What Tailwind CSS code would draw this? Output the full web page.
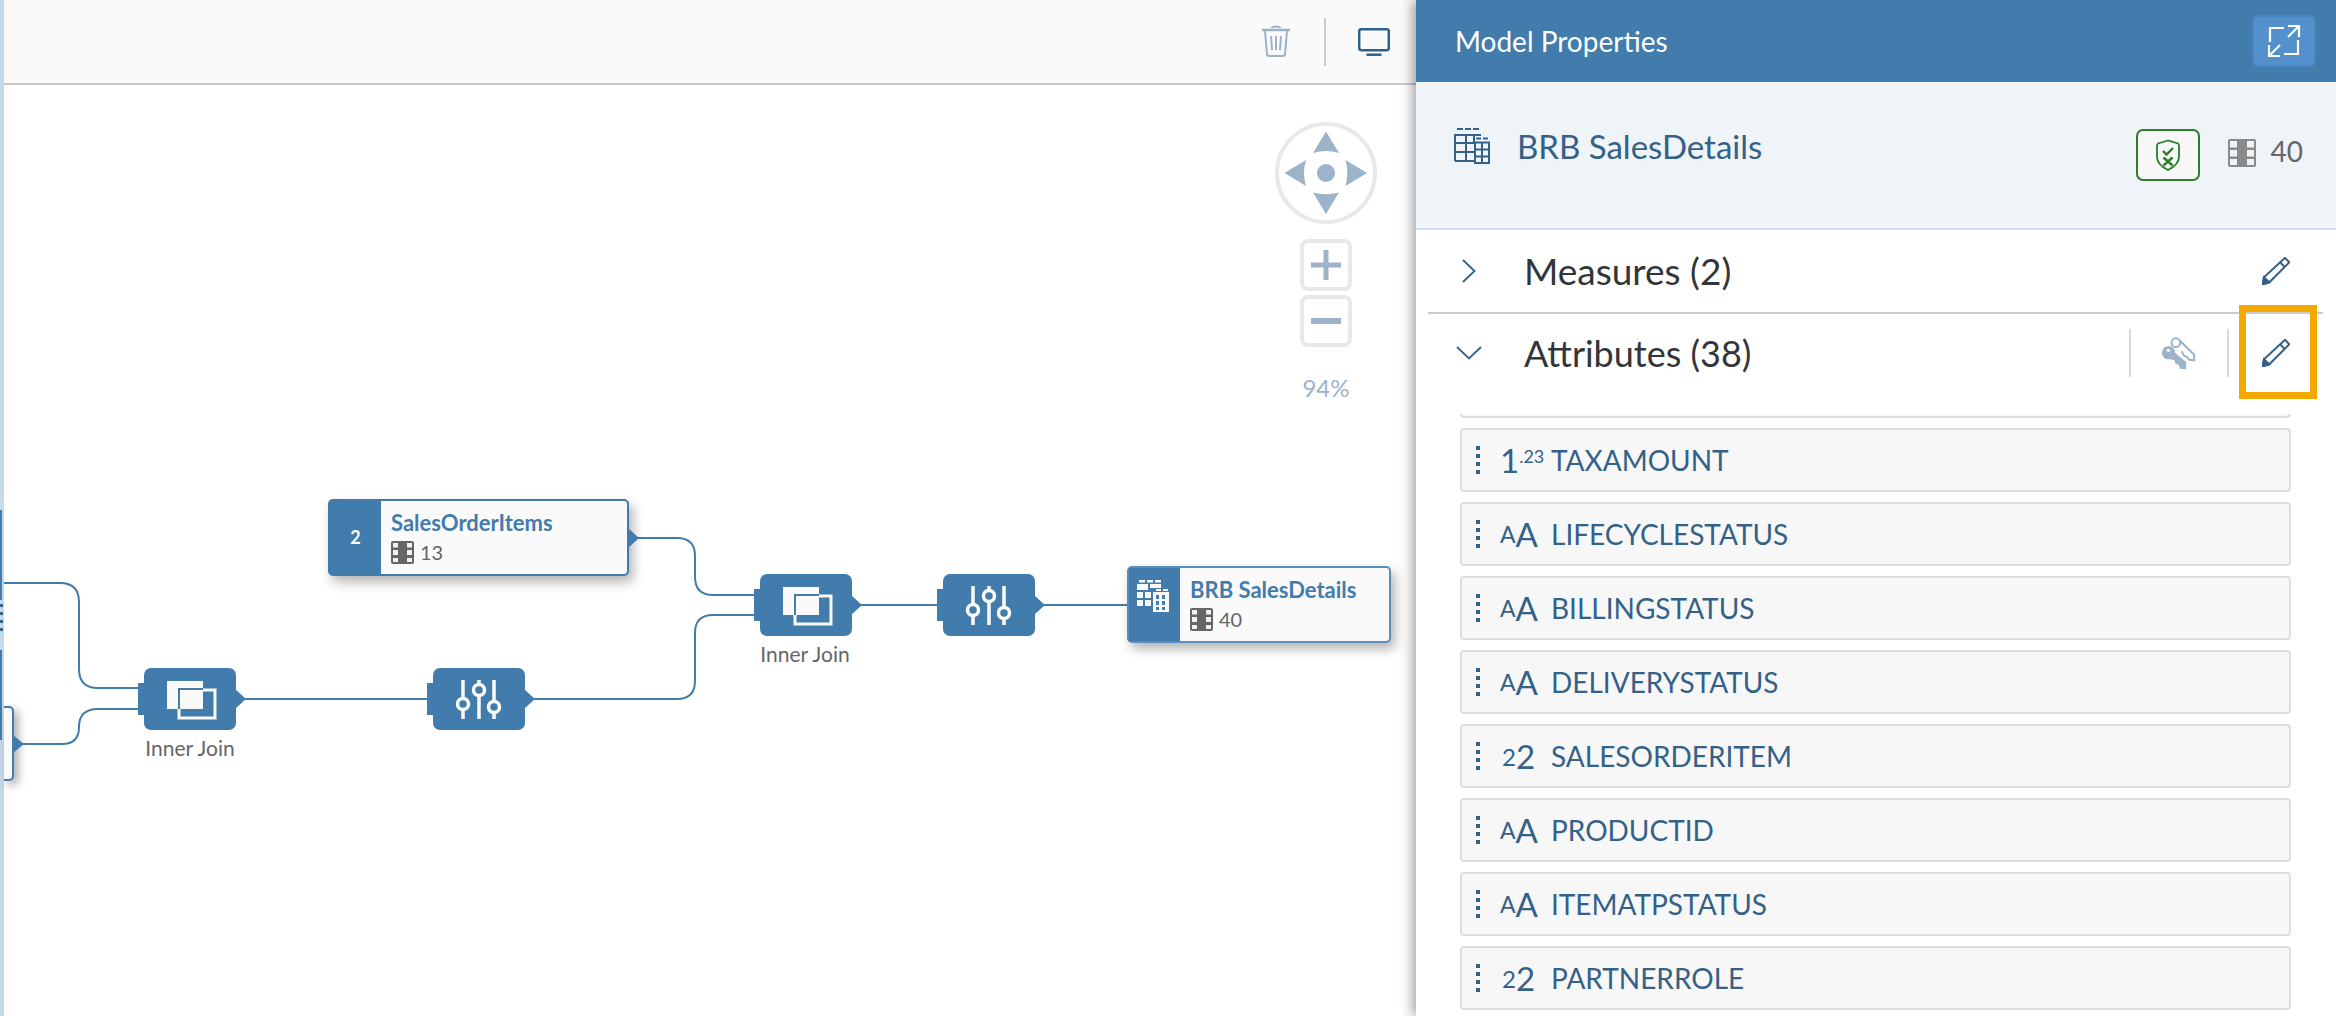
<!DOCTYPE html>
<html>
<head>
<meta charset="utf-8">
<script src="https://cdn.jsdelivr.net/npm/@tailwindcss/browser@4"></script>
<title>Model Properties</title>
</head>
<body class="font-['Lato','Open_Sans',sans-serif] bg-white">
<div class="flex w-[2336px] h-[1016px] overflow-hidden relative">

  <!-- Left: editor -->
  <div class="relative w-[1416px] h-full shrink-0 bg-white">
    <div class="absolute left-0 top-0 w-[4px] h-full bg-[#c6d9eb]"></div>
    <div class="absolute left-0 top-[510px] w-[2px] h-[90px] bg-[#427cac]"></div>
    <div class="absolute left-0 top-[650px] w-[2px] h-[90px] bg-[#427cac]"></div>
    <div class="absolute left-0 top-[604px] w-[3px] flex flex-col gap-[5px]">
      <div class="h-[3px] bg-[#346187]"></div><div class="h-[3px] bg-[#346187]"></div><div class="h-[3px] bg-[#346187]"></div><div class="h-[3px] bg-[#346187]"></div>
    </div>

    <!-- toolbar -->
    <div class="ml-[4px] h-[85px] bg-[#fafafa] border-b-2 border-[#c8c8c8] flex items-center justify-end pr-[26px]">
      <svg class="w-[28px] h-[32px] mt-[-1px]" viewBox="0 0 28 32" fill="none" stroke="#9bb3c9" stroke-width="2"><path d="M0 5h28" stroke-width="2.5"/><path d="M10 3c0-2 8-2 8 0" stroke-width="2"/><path d="M3 6l2 23c0 1.500 1 2 2 2h14c1 0 2-.5 2-2l2-23"/><path d="M9 11l1 14M14 11v14M19 11l-1 14"/></svg>
      <div class="w-[2px] h-[48px] bg-[#cccccc] ml-[34px] mr-[32px]"></div>
      <svg class="w-[32px] h-[28px]" viewBox="0 0 32 28" fill="none" stroke="#2f6089" stroke-width="2.500"><rect x="1.200" y="1.200" width="29.600" height="21" rx="2"/><path d="M8.500 26.700h15"/></svg>
    </div>

    <!-- nav control -->
    <div class="absolute left-[1275px] top-[122px] w-[102px] flex flex-col items-center">
      <svg class="w-[102px] h-[102px]" viewBox="0 0 102 102">
        <circle cx="51" cy="51" r="49" fill="#fff" stroke="#e8e8e8" stroke-width="4"/>
        <g fill="#9db3c9">
          <path d="M51 9.500L64 31Q51 27 38 31Z"/>
          <path d="M51 92L64 70.500Q51 74 38 70.500Z"/>
          <path d="M9.500 51L31 38Q27 51 31 64Z"/>
          <path d="M92 51L70.500 38Q74 51 70.500 64Z"/>
          <circle cx="51" cy="51" r="9"/>
        </g>
      </svg>
      <div class="mt-[15px] w-[52px] h-[52px] rounded-[8px] border-4 border-[#e8e8e8] bg-white flex items-center justify-center">
        <svg class="w-[30px] h-[30px]" viewBox="0 0 30 30" fill="#9db3c9"><path d="M12.500 0h5v12.500H30v5H17.500V30h-5V17.500H0v-5h12.500z"/></svg>
      </div>
      <div class="mt-[4px] w-[52px] h-[52px] rounded-[8px] border-4 border-[#e8e8e8] bg-white flex items-center justify-center">
        <div class="w-[30px] h-[6px] bg-[#9db3c9]"></div>
      </div>
      <div class="mt-[27px] text-[24px] leading-[28px] text-[#9db3c9]">94%</div>
    </div>

    <!-- connectors -->
    <svg class="absolute left-0 top-0" width="1416" height="1016" fill="none" stroke="#427cac" stroke-width="2">
      <path d="M4 583H60Q79 583 79 602V669Q79 688 98 688H140"/>
      <path d="M20 744H62Q79 744 79 727Q79 709 98 709H140"/>
      <path d="M240 699H430"/>
      <path d="M634 538H677Q695 538 695 556V577Q695 595 713 595H756"/>
      <path d="M530 699H677Q695 699 695 681V633Q695 615 713 615H756"/>
      <path d="M855 605H940"/>
      <path d="M1040 605H1128"/>
    </svg>

    <!-- partial node at left edge -->
    <div class="absolute left-[4px] top-[706px] w-[10px] h-[75px] bg-[#fafafa] border-2 border-l-0 border-[#427cac] rounded-r-[5px] shadow-[4px_4px_10px_rgba(0,0,0,0.35)]"></div>
    <svg class="absolute left-[13px] top-[735px]" width="11" height="18" viewBox="0 0 11 18"><path d="M0 0L11 9L0 18Z" fill="#427cac"/></svg>

    <!-- join 1 -->
    <div class="absolute left-[138px] top-[668px] w-[108px] h-[62px]">
      <div class="absolute left-0 top-[15px] w-[7px] h-[32px] bg-[#427cac]"></div>
      <div class="absolute left-[6px] top-0 w-[92px] h-[62px] rounded-[7px] bg-[#427cac] flex items-center justify-center">
        <svg width="92" height="62" viewBox="0 0 92 62"><rect x="23" y="13" width="36" height="28" fill="#fafafa"/><rect x="35" y="22" width="36" height="28" fill="none" stroke="#fafafa" stroke-width="3"/><path d="M35 41V21H59" fill="none" stroke="#427cac" stroke-width="2"/></svg>
      </div>
      <svg class="absolute left-[98px] top-[22px]" width="10" height="18" viewBox="0 0 10 18"><path d="M0 0L10 9L0 18Z" fill="#427cac"/></svg>
    </div>
    <div class="absolute left-[140px] top-[736px] w-[100px] text-center text-[21px] leading-[24px] text-[#666666] whitespace-nowrap">Inner Join</div>

    <!-- filter 1 -->
    <div class="absolute left-[427px] top-[668px] w-[108px] h-[62px]">
      <div class="absolute left-0 top-[15px] w-[7px] h-[32px] bg-[#427cac]"></div>
      <div class="absolute left-[6px] top-0 w-[92px] h-[62px] rounded-[7px] bg-[#427cac]">
        <svg width="92" height="62" viewBox="0 0 92 62" fill="none" stroke="#fafafa" stroke-width="3.500"><path d="M30 12V51M46 12V51M61 12V51"/><g fill="#427cac"><circle cx="30" cy="36" r="5.500"/><circle cx="46" cy="22" r="5.500"/><circle cx="61" cy="39" r="5.500"/></g></svg>
      </div>
      <svg class="absolute left-[98px] top-[22px]" width="10" height="18" viewBox="0 0 10 18"><path d="M0 0L10 9L0 18Z" fill="#427cac"/></svg>
    </div>

    <!-- SalesOrderItems -->
    <div class="absolute left-[328px] top-[499px] w-[301px] h-[77px] flex rounded-[5px] border-2 border-[#427cac] bg-[#fafafa] shadow-[4px_6px_12px_rgba(0,0,0,0.3)]">
      <div class="w-[51px] shrink-0 bg-[#427cac] flex items-center justify-center text-white text-[18px] font-bold">2</div>
      <div class="pl-[10px] pt-[10px]">
        <div class="text-[22px] leading-[24px] font-bold text-[#427cac]">SalesOrderItems</div>
        <div class="flex items-center gap-[6px] mt-[5px] text-[20px] leading-[24px] text-[#666666]">
          <svg width="23" height="23" viewBox="0 0 23 23"><rect width="23" height="23" rx="2" fill="#666666"/><g fill="#f2f2f2"><rect x="2" y="2" width="5" height="4.500"/><rect x="2" y="9" width="5" height="5"/><rect x="2" y="17" width="5" height="4"/><rect x="16" y="2" width="5" height="4.500"/><rect x="16" y="9" width="5" height="5"/><rect x="16" y="17" width="5" height="4"/></g></svg>
          <span>13</span>
        </div>
      </div>
    </div>
    <svg class="absolute left-[629px] top-[529px]" width="10" height="18" viewBox="0 0 10 18"><path d="M0 0L10 9L0 18Z" fill="#427cac"/></svg>

    <!-- join 2 -->
    <div class="absolute left-[754px] top-[574px] w-[108px] h-[62px]">
      <div class="absolute left-0 top-[15px] w-[7px] h-[32px] bg-[#427cac]"></div>
      <div class="absolute left-[6px] top-0 w-[92px] h-[62px] rounded-[7px] bg-[#427cac]">
        <svg width="92" height="62" viewBox="0 0 92 62"><rect x="23" y="13" width="36" height="28" fill="#fafafa"/><rect x="35" y="22" width="36" height="28" fill="none" stroke="#fafafa" stroke-width="3"/><path d="M35 41V21H59" fill="none" stroke="#427cac" stroke-width="2"/></svg>
      </div>
      <svg class="absolute left-[98px] top-[22px]" width="10" height="18" viewBox="0 0 10 18"><path d="M0 0L10 9L0 18Z" fill="#427cac"/></svg>
    </div>
    <div class="absolute left-[755px] top-[642px] w-[100px] text-center text-[21px] leading-[24px] text-[#666666] whitespace-nowrap">Inner Join</div>

    <!-- filter 2 -->
    <div class="absolute left-[937px] top-[574px] w-[108px] h-[62px]">
      <div class="absolute left-0 top-[15px] w-[7px] h-[32px] bg-[#427cac]"></div>
      <div class="absolute left-[6px] top-0 w-[92px] h-[62px] rounded-[7px] bg-[#427cac]">
        <svg width="92" height="62" viewBox="0 0 92 62" fill="none" stroke="#fafafa" stroke-width="3.500"><path d="M30 12V51M46 12V51M61 12V51"/><g fill="#427cac"><circle cx="30" cy="36" r="5.500"/><circle cx="46" cy="22" r="5.500"/><circle cx="61" cy="39" r="5.500"/></g></svg>
      </div>
      <svg class="absolute left-[98px] top-[22px]" width="10" height="18" viewBox="0 0 10 18"><path d="M0 0L10 9L0 18Z" fill="#427cac"/></svg>
    </div>

    <!-- BRB SalesDetails node -->
    <div class="absolute left-[1127px] top-[566px] w-[264px] h-[77px] flex rounded-[5px] border-2 border-[#5a8fbb] bg-[#fafafa] shadow-[4px_6px_12px_rgba(0,0,0,0.3)]">
      <div class="w-[51px] shrink-0 bg-[#427cac] pl-[8px] pt-[12px]">
        <svg width="32" height="32" viewBox="0 0 32 32" fill="#fafafa"><rect x="2" y="0" width="6" height="2.500"/><rect x="10" y="0" width="6" height="2.500"/><rect x="18" y="0" width="6" height="2.500"/><path d="M0 4h11v6H0zM13 4h11v4H13zM0 12h6v6H0zM8 12h6v6H8zM0 20h6v6H0zM8 20h6v6H8zM19 9h5v2h-5zM26 9h5v2h-5z"/><path fill-rule="evenodd" d="M16 12h16v20H16zM19 15v4h3v-4zM25 15v4h3v-4zM19 21v4h3v-4zM25 21v4h3v-4zM19 27v3h3v-3zM25 27v3h3v-3z"/></svg>
      </div>
      <div class="pl-[10px] pt-[10px]">
        <div class="text-[22px] leading-[24px] font-bold text-[#427cac] whitespace-nowrap">BRB SalesDetails</div>
        <div class="flex items-center gap-[6px] mt-[5px] text-[20px] leading-[24px] text-[#666666]">
          <svg width="23" height="23" viewBox="0 0 23 23"><rect width="23" height="23" rx="2" fill="#666666"/><g fill="#f2f2f2"><rect x="2" y="2" width="5" height="4.500"/><rect x="2" y="9" width="5" height="5"/><rect x="2" y="17" width="5" height="4"/><rect x="16" y="2" width="5" height="4.500"/><rect x="16" y="9" width="5" height="5"/><rect x="16" y="17" width="5" height="4"/></g></svg>
          <span>40</span>
        </div>
      </div>
    </div>
  </div>

  <!-- Right panel -->
  <div class="relative w-[920px] h-full shrink-0 bg-white shadow-[-3px_0_12px_rgba(0,0,0,0.4)] flex flex-col">
    <div class="h-[82px] shrink-0 bg-[#427cac] flex items-center justify-between pl-[39px] pr-[20px]">
      <div class="text-[28px] leading-[34px] text-white">Model Properties</div>
      <div class="w-[64px] h-[52px] rounded-[6px] bg-[#5390cc] border-2 border-[#4a86c2] flex items-center justify-center">
        <svg width="34" height="34" viewBox="0 0 34 34" fill="none" stroke="#fff" stroke-width="2.200"><path d="M3 18V4h14M17 30h14V16M21 2h11v11M32 2L21 13M2 21v11h11M2 32l11-11" /></svg>
      </div>
    </div>

    <div class="h-[148px] shrink-0 bg-[#eff4f9] border-b-2 border-[#d1e0ee] flex items-start justify-between pt-[46px] pl-[38px] pr-[33px]">
      <div class="flex items-start">
        <svg width="36" height="36" viewBox="0 0 36 36" fill="none" stroke="#346187" stroke-width="2"><path d="M3 1h6M11 1h6M19 1h6M22 10.500h5M29 10.500h5"/><path d="M1 33V7H27M1 15H20M1 24H20M1 33H20M12 7V33M20 7V14"/><rect x="21" y="14.500" width="14" height="20.500"/><path d="M28 14.500V35M21 21.500H35M21 28.500H35"/></svg>
        <div class="ml-[27px] mt-[1px] text-[33px] leading-[34px] text-[#346187] whitespace-nowrap">BRB SalesDetails</div>
      </div>
      <div class="flex items-start">
        <div class="mt-[1px] w-[64px] h-[52px] rounded-[7px] bg-[#f7f7f7] border-2 border-[#2b7d2b] flex items-center justify-center">
          <svg width="24" height="32" viewBox="0 0 24 32" fill="none" stroke="#2b7d2b" stroke-width="1.800"><path d="M12 1.500L2 4.500L1 6V18C1 24 6 28 12 31C18 28 23 24 23 18V6L22 4.500Z"/><path d="M7 12l3.500 3.500L17 9" stroke-width="2.400"/><path d="M7.500 18.500l9 8M16.500 18.500l-9 8" stroke-width="2.400"/></svg>
        </div>
        <svg class="ml-[28px] mt-[11px]" width="28" height="28" viewBox="0 0 28 28"><rect width="28" height="28" rx="2" fill="#8a8a8a"/><g fill="#eff4f9"><rect x="2" y="2" width="7" height="6.500"/><rect x="2" y="11" width="7" height="6.500"/><rect x="2" y="20" width="7" height="6"/><rect x="19" y="2" width="7" height="6.500"/><rect x="19" y="11" width="7" height="6.500"/><rect x="19" y="20" width="7" height="6"/></g></svg>
        <div class="ml-[15px] mt-[7px] text-[28px] leading-[32px] text-[#666666]">40</div>
      </div>
    </div>

    <!-- Measures -->
    <div class="h-[82px] shrink-0 flex items-center pl-[46px] pr-[46px]">
      <svg width="14" height="24" viewBox="0 0 14 24" fill="none" stroke="#346187" stroke-width="1.800"><path d="M1 1L12.500 12L1 23"/></svg>
      <div class="ml-[48px] text-[37px] leading-[44px] text-[#32363a]">Measures (2)</div>
      <svg class="ml-auto" width="28" height="28" viewBox="0 0 28 28" fill="none" stroke="#346187" stroke-width="2"><path d="M.7 27.300L2 20.300L23 .8L27.300 5.300L7.300 25.300Z"/><path d="M18 5.300L23 10.300"/><path d="M.7 27.300L2 20.300L7.300 25.300Z" fill="#346187"/></svg>
    </div>
    <div class="h-[2px] shrink-0 bg-[#cccccc] ml-[12px] mr-[13px]"></div>

    <!-- Attributes -->
    <div class="h-[78px] shrink-0 flex items-center pl-[40px] pr-[46px]">
      <svg width="26" height="14" viewBox="0 0 26 14" fill="none" stroke="#346187" stroke-width="1.800"><path d="M1 1L13 12.500L25 1"/></svg>
      <div class="ml-[42px] text-[36px] leading-[44px] text-[#32363a]">Attributes (38)</div>
      <div class="ml-auto w-[2px] h-[48px] bg-[#d9d9d9]"></div>
      <svg class="ml-[29px]" width="37" height="35" viewBox="30 20 110 105">
        <g fill="none" stroke="#9db3c9" stroke-width="6"><circle cx="77" cy="40" r="13"/><path d="M88 33L132 76V93L116 91L110 82L102 80L94 66"/></g>
        <path fill="#9db3c9" d="M62 60L108 98V120L90 118L85 106L77 104L72 92L52 88Z"/>
        <circle cx="55" cy="70" r="20" fill="#9db3c9"/>
        <circle cx="55" cy="63" r="5" fill="#fff"/>
      </svg>
      <div class="ml-[30px] w-[2px] h-[48px] bg-[#d9d9d9]"></div>
      <svg class="ml-[33px]" width="28" height="28" viewBox="0 0 28 28" fill="none" stroke="#346187" stroke-width="2"><path d="M.7 27.300L2 20.300L23 .8L27.300 5.300L7.300 25.300Z"/><path d="M18 5.300L23 10.300"/><path d="M.7 27.300L2 20.300L7.300 25.300Z" fill="#346187"/></svg>
    </div>
    <div class="absolute left-[823px] top-[305px] w-[78px] h-[94px] border-[7px] border-[#f3a900]"></div>

    <!-- List -->
    <div class="mt-[22px] ml-[44px] mr-[45px] h-[4px] shrink-0 border-x-2 border-b-2 border-[#dedede] bg-[#f7f7f7] rounded-b-[4px]"></div>
    <div class="mt-[10px] ml-[44px] mr-[45px] flex flex-col gap-[10px]">

      <div class="h-[64px] shrink-0 rounded-[4px] border-2 border-[#dedede] bg-[#f7f7f7] flex items-center pl-[14px] text-[#346187]">
        <div class="flex flex-col gap-[4px]"><div class="w-[4px] h-[4px] bg-[#346187]"></div><div class="w-[4px] h-[4px] bg-[#346187]"></div><div class="w-[4px] h-[4px] bg-[#346187]"></div><div class="w-[4px] h-[4px] bg-[#346187]"></div></div>
        <div class="w-[40px] ml-[20px] shrink-0 flex items-start leading-none"><span class="text-[33px]">1</span><span class="text-[18px] mt-[3px] whitespace-nowrap">.23</span></div>
        <div class="ml-[11px] text-[28px] leading-[32px]">TAXAMOUNT</div>
      </div>

      <div class="h-[64px] shrink-0 rounded-[4px] border-2 border-[#dedede] bg-[#f7f7f7] flex items-center pl-[14px] text-[#346187]">
        <div class="flex flex-col gap-[4px]"><div class="w-[4px] h-[4px] bg-[#346187]"></div><div class="w-[4px] h-[4px] bg-[#346187]"></div><div class="w-[4px] h-[4px] bg-[#346187]"></div><div class="w-[4px] h-[4px] bg-[#346187]"></div></div>
        <div class="w-[40px] ml-[20px] shrink-0 flex items-end leading-none"><span class="text-[23px] mb-[5px]">A</span><span class="text-[33px]">A</span></div>
        <div class="ml-[11px] text-[28px] leading-[32px]">LIFECYCLESTATUS</div>
      </div>

      <div class="h-[64px] shrink-0 rounded-[4px] border-2 border-[#dedede] bg-[#f7f7f7] flex items-center pl-[14px] text-[#346187]">
        <div class="flex flex-col gap-[4px]"><div class="w-[4px] h-[4px] bg-[#346187]"></div><div class="w-[4px] h-[4px] bg-[#346187]"></div><div class="w-[4px] h-[4px] bg-[#346187]"></div><div class="w-[4px] h-[4px] bg-[#346187]"></div></div>
        <div class="w-[40px] ml-[20px] shrink-0 flex items-end leading-none"><span class="text-[23px] mb-[5px]">A</span><span class="text-[33px]">A</span></div>
        <div class="ml-[11px] text-[28px] leading-[32px]">BILLINGSTATUS</div>
      </div>

      <div class="h-[64px] shrink-0 rounded-[4px] border-2 border-[#dedede] bg-[#f7f7f7] flex items-center pl-[14px] text-[#346187]">
        <div class="flex flex-col gap-[4px]"><div class="w-[4px] h-[4px] bg-[#346187]"></div><div class="w-[4px] h-[4px] bg-[#346187]"></div><div class="w-[4px] h-[4px] bg-[#346187]"></div><div class="w-[4px] h-[4px] bg-[#346187]"></div></div>
        <div class="w-[40px] ml-[20px] shrink-0 flex items-end leading-none"><span class="text-[23px] mb-[5px]">A</span><span class="text-[33px]">A</span></div>
        <div class="ml-[11px] text-[28px] leading-[32px]">DELIVERYSTATUS</div>
      </div>

      <div class="h-[64px] shrink-0 rounded-[4px] border-2 border-[#dedede] bg-[#f7f7f7] flex items-center pl-[14px] text-[#346187]">
        <div class="flex flex-col gap-[4px]"><div class="w-[4px] h-[4px] bg-[#346187]"></div><div class="w-[4px] h-[4px] bg-[#346187]"></div><div class="w-[4px] h-[4px] bg-[#346187]"></div><div class="w-[4px] h-[4px] bg-[#346187]"></div></div>
        <div class="w-[40px] ml-[20px] pl-[2px] shrink-0 flex items-end leading-none"><span class="text-[24px] mb-[4px]">2</span><span class="text-[33px]">2</span></div>
        <div class="ml-[11px] text-[28px] leading-[32px]">SALESORDERITEM</div>
      </div>

      <div class="h-[64px] shrink-0 rounded-[4px] border-2 border-[#dedede] bg-[#f7f7f7] flex items-center pl-[14px] text-[#346187]">
        <div class="flex flex-col gap-[4px]"><div class="w-[4px] h-[4px] bg-[#346187]"></div><div class="w-[4px] h-[4px] bg-[#346187]"></div><div class="w-[4px] h-[4px] bg-[#346187]"></div><div class="w-[4px] h-[4px] bg-[#346187]"></div></div>
        <div class="w-[40px] ml-[20px] shrink-0 flex items-end leading-none"><span class="text-[23px] mb-[5px]">A</span><span class="text-[33px]">A</span></div>
        <div class="ml-[11px] text-[28px] leading-[32px]">PRODUCTID</div>
      </div>

      <div class="h-[64px] shrink-0 rounded-[4px] border-2 border-[#dedede] bg-[#f7f7f7] flex items-center pl-[14px] text-[#346187]">
        <div class="flex flex-col gap-[4px]"><div class="w-[4px] h-[4px] bg-[#346187]"></div><div class="w-[4px] h-[4px] bg-[#346187]"></div><div class="w-[4px] h-[4px] bg-[#346187]"></div><div class="w-[4px] h-[4px] bg-[#346187]"></div></div>
        <div class="w-[40px] ml-[20px] shrink-0 flex items-end leading-none"><span class="text-[23px] mb-[5px]">A</span><span class="text-[33px]">A</span></div>
        <div class="ml-[11px] text-[28px] leading-[32px]">ITEMATPSTATUS</div>
      </div>

      <div class="h-[64px] shrink-0 rounded-[4px] border-2 border-[#dedede] bg-[#f7f7f7] flex items-center pl-[14px] text-[#346187]">
        <div class="flex flex-col gap-[4px]"><div class="w-[4px] h-[4px] bg-[#346187]"></div><div class="w-[4px] h-[4px] bg-[#346187]"></div><div class="w-[4px] h-[4px] bg-[#346187]"></div><div class="w-[4px] h-[4px] bg-[#346187]"></div></div>
        <div class="w-[40px] ml-[20px] pl-[2px] shrink-0 flex items-end leading-none"><span class="text-[24px] mb-[4px]">2</span><span class="text-[33px]">2</span></div>
        <div class="ml-[11px] text-[28px] leading-[32px]">PARTNERROLE</div>
      </div>
    </div>
  </div>
</div>
</body>
</html>
